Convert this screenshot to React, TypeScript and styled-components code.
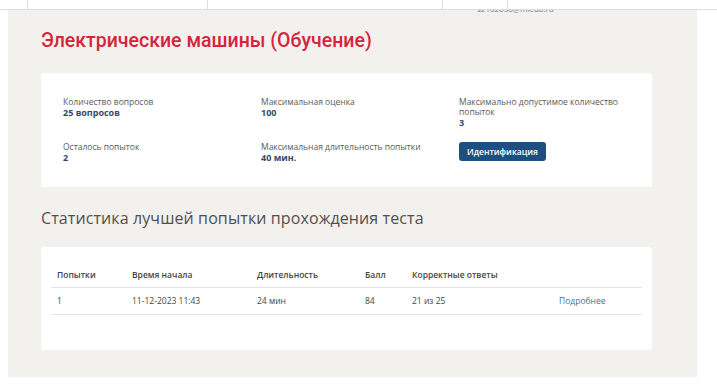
import styled, { createGlobalStyle } from 'styled-components';

const GlobalStyle = createGlobalStyle`
  body {
    margin: 0;
    background: #ffffff;
    font-family: "Open Sans", "Liberation Sans", sans-serif;
  }
`;

interface InfoItem {
  label: string;
  value?: string;
  button?: string;
}

const info: InfoItem[] = [
  { label: 'Количество вопросов', value: '25 вопросов' },
  { label: 'Максимальная оценка', value: '100' },
  { label: 'Максимально допустимое количество попыток', value: '3' },
  { label: 'Осталось попыток', value: '2' },
  { label: 'Максимальная длительность попытки', value: '40 мин.' },
  { label: '', button: 'Идентификация' },
];

const columns = ['Попытки', 'Время начала', 'Длительность', 'Балл', 'Корректные ответы', ''];
const widths = [75, 125, 108, 47, 147, 89];

const attempts = [
  { n: '1', start: '11-12-2023 11:43', duration: '24 мин', score: '84', correct: '21 из 25' },
];

const App = () => {
  return (
    <>
      <GlobalStyle />
      <TopBar>
        <TopCell $width={28} />
        <TopCell $width={180} />
        <TopCell $width={235} />
        <TopCell $width={65} />
        <TopCell $width={209} $last />
      </TopBar>
      <Main>
        <UserLine>s2102030@mieda.ru</UserLine>
        <PageTitle>Электрические машины (Обучение)</PageTitle>
        <InfoCard>
          {info.map((item, i) => (
            <InfoCell key={i}>
              {item.button ? (
                <IdButton>{item.button}</IdButton>
              ) : (
                <>
                  <Label>{item.label}</Label>
                  <Value>{item.value}</Value>
                </>
              )}
            </InfoCell>
          ))}
        </InfoCard>
        <SectionTitle>Статистика лучшей попытки прохождения теста</SectionTitle>
        <TableCard>
          <Table>
            <colgroup>
              {widths.map((w, i) => (
                <col key={i} style={{ width: w }} />
              ))}
            </colgroup>
            <thead>
              <tr>
                {columns.map((c, i) => (
                  <Th key={i}>{c}</Th>
                ))}
              </tr>
            </thead>
            <tbody>
              {attempts.map((a) => (
                <tr key={a.n}>
                  <Td>{a.n}</Td>
                  <Td>{a.start}</Td>
                  <Td>{a.duration}</Td>
                  <Td>{a.score}</Td>
                  <Td>{a.correct}</Td>
                  <Td>
                    <MoreLink href="#">Подробнее</MoreLink>
                  </Td>
                </tr>
              ))}
            </tbody>
          </Table>
        </TableCard>
      </Main>
    </>
  );
};

const TopBar = styled.header`
  position: relative;
  z-index: 1;
  display: flex;
  height: 9px;
  background: #ffffff;
  border-bottom: 1px solid #dcdcd8;
`;

const TopCell = styled.div<{ $width: number; $last?: boolean }>`
  width: ${(p) => p.$width}px;
  border-right: ${(p) => (p.$last ? 'none' : '1px solid #dcdcd8')};
  box-sizing: border-box;
`;

const Main = styled.main`
  margin-left: 8px;
  width: 689px;
  height: 367px;
  box-sizing: border-box;
  padding: 0 45px 0 33px;
  background: #f2f1ee;
  display: flex;
  flex-direction: column;
`;

const UserLine = styled.div`
  margin: -6px 0 0 436px;
  height: 9px;
  font-size: 8px;
  line-height: 9px;
  color: #6f7c8c;
`;

const PageTitle = styled.h1`
  margin: 16px 0 20px;
  font-family: Roboto, "Liberation Sans", sans-serif;
  font-size: 19.5px;
  line-height: 24px;
  font-weight: 500;
  color: #d6243c;
`;

const InfoCard = styled.section`
  background: #ffffff;
  border-radius: 3px;
  padding: 24px 22px 24px;
  display: grid;
  grid-template-columns: 198px 198px 1fr;
  row-gap: 14px;
  align-items: start;
`;

const InfoCell = styled.div`
  display: flex;
  flex-direction: column;
  max-width: 165px;
`;

const Label = styled.span`
  font-size: 8.5px;
  line-height: 10px;
  color: #5a5a5a;
`;

const Value = styled.span`
  font-size: 9px;
  line-height: 11px;
  font-weight: 700;
  color: #34496a;
`;

const IdButton = styled.button`
  display: block;
  width: 87px;
  height: 19px;
  padding: 0;
  border: none;
  border-radius: 3px;
  background: #1e4f82;
  color: #ffffff;
  font-family: "Open Sans", "Liberation Sans", sans-serif;
  font-size: 8.5px;
  font-weight: 600;
  cursor: pointer;
`;

const SectionTitle = styled.h2`
  margin: 20px 0 18px;
  font-size: 16px;
  line-height: 22px;
  font-weight: 400;
  letter-spacing: 0.1px;
  color: #505050;
`;

const TableCard = styled.section`
  background: #ffffff;
  border-radius: 3px;
  padding: 16px 10px 35px;
`;

const Table = styled.table`
  width: 100%;
  table-layout: fixed;
  border-collapse: collapse;
  font-size: 8.5px;
  color: #444444;
`;

const Th = styled.th`
  text-align: left;
  font-weight: 600;
  padding: 6px 6px;
  line-height: 12px;
  border-bottom: 1px solid #e4e4e4;
`;

const Td = styled.td`
  padding: 7px 6px;
  line-height: 12px;
  border-bottom: 1px solid #e4e4e4;
`;

const MoreLink = styled.a`
  color: #4a6f9a;
  text-decoration: none;
`;

export default App;
